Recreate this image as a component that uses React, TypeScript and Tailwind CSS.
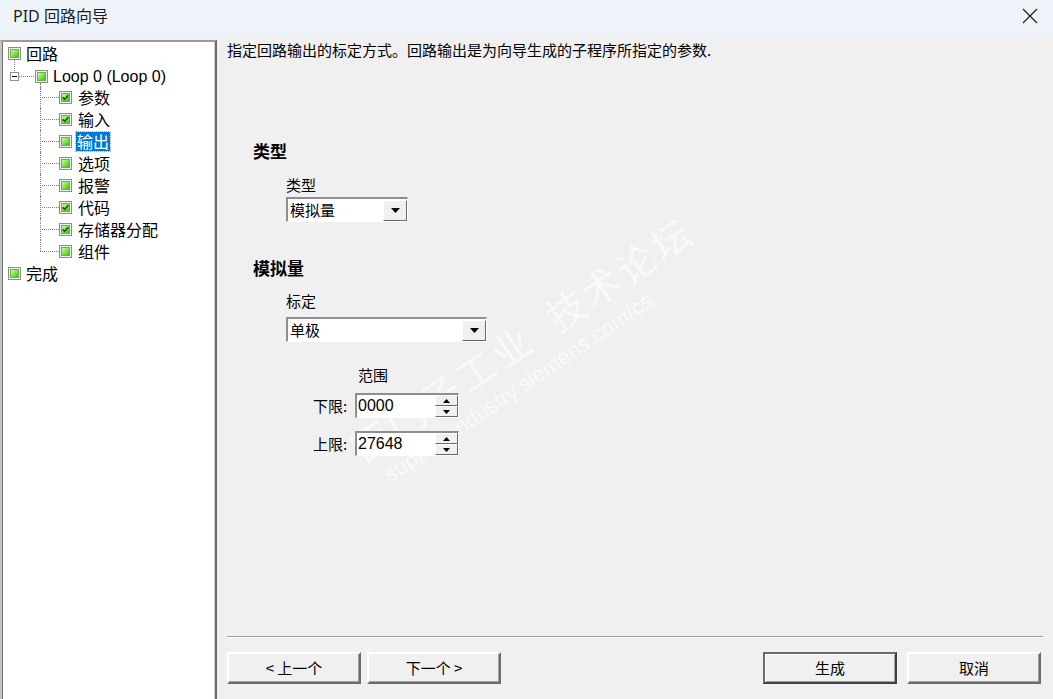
import React from "react";

const cjk = "font-['Noto_Sans_CJK_SC','Noto_Sans',sans-serif]";

// green tree state box, optionally checked
function StateBox({ checked = false }: { checked?: boolean }) {
  return (
    <svg width="13" height="13" viewBox="0 0 13 13" className="shrink-0">
      <defs>
        <linearGradient id="g" x1="0" y1="0" x2="1" y2="1">
          <stop offset="0" stopColor="#d6ffb5" />
          <stop offset="0.55" stopColor="#7de04a" />
          <stop offset="1" stopColor="#3fb21a" />
        </linearGradient>
      </defs>
      <rect x="0.5" y="0.5" width="12" height="12" fill="#f2f2f2" stroke="#8c8c8c" />
      <rect x="2.5" y="2.5" width="8" height="8" fill="url(#g)" stroke="#5fb63a" />
      {checked && (
        <path d="M3.6 6.4 L5.6 8.4 L9.4 4.2" fill="none" stroke="#1e5c16" strokeWidth="1.6" />
      )}
    </svg>
  );
}

function ExpandBox() {
  return (
    <svg width="9" height="9" viewBox="0 0 9 9" className="shrink-0">
      <rect x="0.5" y="0.5" width="8" height="8" fill="#fff" stroke="#8f8f8f" />
      <path d="M2 4.5 H7" stroke="#000" />
    </svg>
  );
}

const children = [
  { name: "参数", checked: true },
  { name: "输入", checked: true },
  { name: "输出", checked: false, selected: true },
  { name: "选项", checked: false },
  { name: "报警", checked: false },
  { name: "代码", checked: true },
  { name: "存储器分配", checked: true },
  { name: "组件", checked: false },
];

function Tree() {
  return (
    <div className="w-[217px] h-full border-l-2 border-l-[#c4c4c4] border-r-2 border-r-[#6b6b6b] border-t-2 border-t-[#9a9a9a]">
      <div className={`relative h-full bg-white border-l border-l-[#707070] border-r border-r-[#d8d8d8] ${cjk} text-[16px] text-black`}>
        {/* 回路 */}
        <div className="relative h-[22px] flex items-center pl-[5px]">
          <StateBox />
          <span className="ml-[5px] leading-[20px]">回路</span>
          <div className="absolute left-[11px] top-[18px] h-[13px] border-l border-dotted border-[#808080]" />
        </div>
        {/* Loop 0 */}
        <div className="relative h-[22px] flex items-center pl-[7px] pt-[3px]">
          <ExpandBox />
          <div className="w-[15px] border-t border-dotted border-[#808080]" />
          <div className="ml-[1px]">
            <StateBox />
          </div>
          <span className="ml-[5px] leading-[20px] font-['Liberation_Sans','Noto_Sans_CJK_SC',sans-serif]">Loop 0 (Loop 0)</span>
          <div className="absolute left-[37px] top-[19px] h-[6px] border-l border-dotted border-[#808080]" />
        </div>
        {children.map((c, i) => (
          <div key={c.name} className="relative h-[22px] flex items-center pl-[37px]">
            <div
              className={`absolute left-[37px] top-0 border-l border-dotted border-[#808080] ${
                i === children.length - 1 ? "h-[11px]" : "h-[22px]"
              }`}
            />
            <div className="w-[19px] border-t border-dotted border-[#808080]" />
            <StateBox checked={c.checked} />
            {c.selected ? (
              <span className="ml-[4px] px-[1px] leading-[19px] bg-[#0078d7] text-white outline-1 outline-dotted outline-[#e8a040]">
                {c.name}
              </span>
            ) : (
              <span className="ml-[6px] leading-[20px]">{c.name}</span>
            )}
          </div>
        ))}
        {/* 完成 */}
        <div className="h-[22px] flex items-center pl-[5px]">
          <StateBox />
          <span className="ml-[5px] leading-[20px]">完成</span>
        </div>
      </div>
    </div>
  );
}

function DropArrow({ w }: { w: string }) {
  return (
    <div className={`${w} h-[21px] bg-[#f0f0f0] border-t border-l border-t-white border-l-white border-b border-r border-b-[#696969] border-r-[#696969] flex items-center justify-center`}>
      <svg width="9" height="5" viewBox="0 0 9 5">
        <path d="M0 0 H9 L4.5 5 Z" fill="#000" />
      </svg>
    </div>
  );
}

function Combo({ width, value }: { width: string; value: string }) {
  return (
    <div className={`${width} h-[25px] border-t-2 border-l-2 border-t-[#8e8e8e] border-l-[#8e8e8e] border-b border-r border-b-white border-r-white bg-white flex items-center`}>
      <span className={`flex-1 pl-[2px] text-[15px] leading-[20px] ${cjk}`}>{value}</span>
      <DropArrow w="w-[24px]" />
    </div>
  );
}

function SpinBtn({ up }: { up: boolean }) {
  return (
    <div className="h-[11px] w-full bg-[#f0f0f0] border-t border-l border-t-white border-l-white border-b border-r border-b-[#696969] border-r-[#696969] flex items-center justify-center">
      <svg width="7" height="4" viewBox="0 0 7 4">
        <path d={up ? "M0 4 H7 L3.5 0 Z" : "M0 0 H7 L3.5 4 Z"} fill="#000" />
      </svg>
    </div>
  );
}

function SpinRow({ label, value }: { label: string; value: string }) {
  return (
    <div className="flex items-center">
      <span className={`w-[42px] pl-[27px] box-content text-[15px] leading-[20px] ${cjk} -ml-[27px]`}>{label}</span>
      <div className="w-[104px] h-[25px] border-t-2 border-l-2 border-t-[#8e8e8e] border-l-[#8e8e8e] border-b border-r border-b-white border-r-white bg-white flex items-center">
        <span className="flex-1 pl-[1px] text-[16px] leading-[20px] font-['Liberation_Sans',sans-serif]">{value}</span>
        <div className="w-[23px] h-[22px] flex flex-col">
          <SpinBtn up />
          <SpinBtn up={false} />
        </div>
      </div>
    </div>
  );
}

function Btn({ label, isDefault = false }: { label: string; isDefault?: boolean }) {
  return (
    <div
      className={`w-[134px] h-[32px] flex items-center justify-center bg-[#f0f0f0] text-[15px] ${cjk} ${
        isDefault
          ? "border-2 border-t-[#6b6b6b] border-l-[#6b6b6b] border-b-[#404040] border-r-[#404040] shadow-[inset_1px_1px_0_#fff,inset_-1px_-1px_0_#a0a0a0]"
          : "border-2 border-t-white border-l-white border-b-[#6b6b6b] border-r-[#6b6b6b] shadow-[inset_-1px_-1px_0_#a0a0a0]"
      }`}
    >
      {label}
    </div>
  );
}

export default function App() {
  return (
    <div className="relative w-[1053px] h-[699px] overflow-hidden bg-[#f0f0f0] flex flex-col text-black">
      {/* watermark, sits behind the dialog controls */}
      <div className="absolute left-[362px] top-[420px] -rotate-[34deg] origin-left pointer-events-none select-none">
        <div className={`text-[38px] tracking-[4px] text-[#f9f9f9] ${cjk}`}>
          西门子工业&nbsp;&nbsp;技术论坛
        </div>
        <div className="text-[22px] text-[#f9f9f9] font-['Liberation_Sans',sans-serif] -mt-[6px] ml-[12px]">
          support.industry.siemens.com/cs
        </div>
      </div>

      {/* Title bar */}
      <div className="relative h-[36px] shrink-0 bg-[#eef3f9] flex items-center justify-between pl-[13px] pr-[15px]">
        <span className="text-[16px] text-[#1b1b1b] font-['Noto_Sans','Noto_Sans_CJK_SC',sans-serif] -mt-[5px]">PID 回路向导</span>
        <svg width="16" height="16" viewBox="0 0 16 16" className="-mt-[5px]">
          <path d="M1 1 L15 15 M15 1 L1 15" stroke="#1b1b1b" strokeWidth="1.2" />
        </svg>
      </div>

      <div className="relative flex-1 flex pt-[4px] min-h-0">
        <Tree />

        <div className="flex-1 flex flex-col pl-[10px] pr-[10px] pb-[15px]">
          <div className={`text-[15px] leading-[20px] ${cjk}`}>
            指定回路输出的标定方式。回路输出是为向导生成的子程序所指定的参数.
          </div>

          <div className={`mt-[81px] ml-[26px] text-[17px] leading-[20px] font-bold ${cjk}`}>类型</div>
          <div className="ml-[59px] flex flex-col">
            <span className={`mt-[14px] text-[15px] leading-[20px] ${cjk}`}>类型</span>
            <div className="mt-[2px]">
              <Combo width="w-[122px]" value="模拟量" />
            </div>
          </div>

          <div className={`mt-[36px] ml-[26px] text-[17px] leading-[20px] font-bold ${cjk}`}>模拟量</div>
          <div className="ml-[59px] flex flex-col">
            <span className={`mt-[13px] text-[15px] leading-[20px] ${cjk}`}>标定</span>
            <div className="mt-[6px]">
              <Combo width="w-[201px]" value="单极" />
            </div>
          </div>

          <div className="ml-[86px] flex flex-col">
            <span className={`mt-[23px] ml-[45px] text-[15px] leading-[20px] ${cjk}`}>范围</span>
            <div className="mt-[8px]">
              <SpinRow label="下限:" value="0000" />
            </div>
            <div className="mt-[13px]">
              <SpinRow label="上限:" value="27648" />
            </div>
          </div>

          <div className="flex-1" />
          <div className="h-[2px] border-t border-t-[#a0a0a0] border-b border-b-white" />
          <div className="mt-[14px] flex items-center pr-[2px]">
            <Btn label="< 上一个" />
            <div className="ml-[6px]">
              <Btn label="下一个 >" />
            </div>
            <div className="flex-1" />
            <Btn label="生成" isDefault />
            <div className="ml-[10px]">
              <Btn label="取消" />
            </div>
          </div>
        </div>
      </div>
    </div>
  );
}
